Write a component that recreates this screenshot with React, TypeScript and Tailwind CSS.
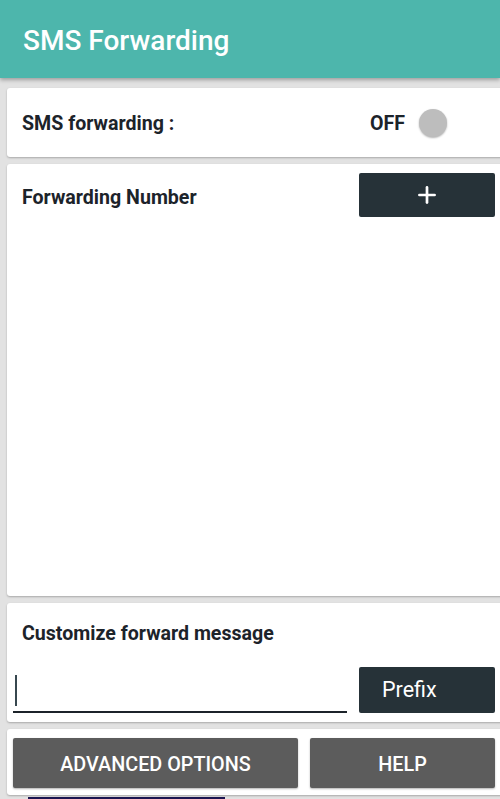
import { Plus } from 'lucide-react'

const card = 'ml-[7px] w-[500px] shrink-0 rounded-[3px] bg-white shadow-[0_1px_2px_rgba(0,0,0,0.25)]'
const label = 'text-[19.6px] font-bold'

export default function App() {
  return (
    <div className="flex h-[799px] w-[500px] flex-col overflow-hidden bg-[#e2e2e2] font-['Roboto',sans-serif] text-[#1c232a]">
      {/* 툴바 */}
      <header className="relative z-10 flex h-[78px] shrink-0 items-center bg-[#4db6ac] px-[23px] shadow-[0_2px_4px_rgba(0,0,0,0.3)]">
        <h1 className="mt-[4px] text-[28px] font-medium text-white">SMS Forwarding</h1>
      </header>

      <div className="mt-[10px] flex flex-col gap-[7px]">
        <section className={`${card} flex h-[69px] items-center pl-[15px] pr-[60px] pt-[3px]`}>
          <span className={`flex-1 ${label}`}>SMS forwarding :</span>
          <span className={label}>OFF</span>
          <span className="mb-[2px] ml-[14px] h-[28px] w-[28px] rounded-full bg-[#bdbdbd] shadow-[0_1px_2px_rgba(0,0,0,0.3)]" />
        </section>

        <section className={`${card} flex h-[432px] items-start pl-[15px] pr-[12px] pt-[9px]`}>
          <span className={`mt-[10px] flex-1 ${label}`}>Forwarding Number</span>
          <button
            type="button"
            className="flex h-[44px] w-[136px] items-center justify-center rounded-[2px] bg-[#263238] text-white"
          >
            <Plus size={26} strokeWidth={2.5} />
          </button>
        </section>

        <section className={`${card} flex h-[119px] flex-col pl-[6px] pr-[12px] pt-[16px]`}>
          <span className={`ml-[9px] ${label}`}>Customize forward message</span>
          <div className="mt-[19px] flex items-end">
            <div className="flex h-[44px] w-[334px] items-center border-b-2 border-[#1c232a]">
              <span className="ml-[2px] h-[31px] w-[2px] bg-[#37474f]" />
            </div>
            <button
              type="button"
              className="ml-[12px] flex h-[46px] w-[136px] items-center rounded-[2px] bg-[#263238] pl-[23px] text-[21.5px] text-white"
            >
              Prefix
            </button>
          </div>
        </section>

        <section className={`${card} flex h-[66px] gap-[12px] pl-[6px] pt-[9px]`}>
          <button
            type="button"
            className="h-[50px] w-[285px] rounded-[2px] bg-[#5c5c5c] pt-[3px] text-[19.8px] font-medium text-white shadow-[0_1px_2px_rgba(0,0,0,0.3)]"
          >
            ADVANCED OPTIONS
          </button>
          <button
            type="button"
            className="h-[50px] w-[185px] rounded-[2px] bg-[#5c5c5c] pt-[3px] text-[19.8px] font-medium text-white shadow-[0_1px_2px_rgba(0,0,0,0.3)]"
          >
            HELP
          </button>
        </section>
      </div>

      <div className="ml-[28px] mt-[2px] h-[4px] w-[197px] bg-[#1a1550]" />
    </div>
  )
}
